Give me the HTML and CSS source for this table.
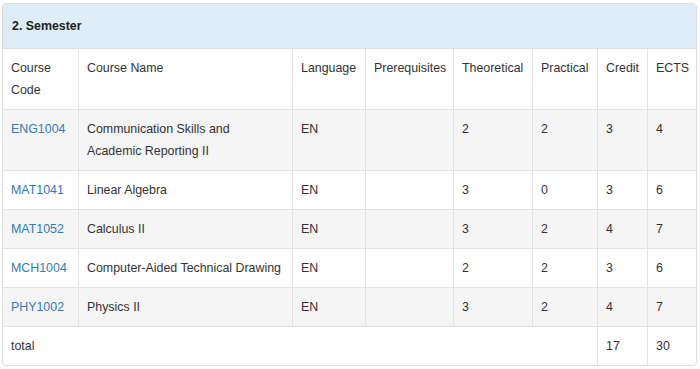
FILE: index.html
```html
<!DOCTYPE html>
<html lang="en">
<head>
<meta charset="utf-8">
<title>2. Semester</title>
<link rel="stylesheet" href="styles.css">
</head>
<body>
<div class="panel">
  <div class="panel-heading">2. Semester</div>
  <table class="courses">
    <colgroup>
      <col class="c-code"><col class="c-name"><col class="c-lang"><col class="c-pre">
      <col class="c-theo"><col class="c-prac"><col class="c-cred"><col class="c-ects">
    </colgroup>
    <thead>
      <tr>
        <th>Course Code</th>
        <th>Course Name</th>
        <th>Language</th>
        <th>Prerequisites</th>
        <th>Theoretical</th>
        <th>Practical</th>
        <th>Credit</th>
        <th>ECTS</th>
      </tr>
    </thead>
    <tbody>
      <tr class="odd">
        <td><a href="#">ENG1004</a></td>
        <td>Communication Skills and Academic Reporting II</td>
        <td>EN</td><td></td><td>2</td><td>2</td><td>3</td><td>4</td>
      </tr>
      <tr>
        <td><a href="#">MAT1041</a></td>
        <td>Linear Algebra</td>
        <td>EN</td><td></td><td>3</td><td>0</td><td>3</td><td>6</td>
      </tr>
      <tr class="odd">
        <td><a href="#">MAT1052</a></td>
        <td>Calculus II</td>
        <td>EN</td><td></td><td>3</td><td>2</td><td>4</td><td>7</td>
      </tr>
      <tr>
        <td><a href="#">MCH1004</a></td>
        <td>Computer-Aided Technical Drawing</td>
        <td>EN</td><td></td><td>2</td><td>2</td><td>3</td><td>6</td>
      </tr>
      <tr class="odd">
        <td><a href="#">PHY1002</a></td>
        <td>Physics II</td>
        <td>EN</td><td></td><td>3</td><td>2</td><td>4</td><td>7</td>
      </tr>
      <tr class="total">
        <td colspan="6">total</td>
        <td>17</td>
        <td>30</td>
      </tr>
    </tbody>
  </table>
</div>
</body>
</html>
```

FILE: styles.css
```css
html, body {
  background: #ffffff;
}
body {
  margin: 3px 3px 0 2px;
  font-family: "Liberation Sans", Arial, Helvetica, sans-serif;
  font-size: 12.4px;
  line-height: 22px;
  color: #333333;
}
.panel {
  border: 1px solid #dddddd;
  border-radius: 4px;
  overflow: hidden;
  background: #ffffff;
}
.panel-heading {
  background: #deedf8;
  border-bottom: 1px solid #dddddd;
  padding: 11px 9px;
  font-weight: bold;
  color: #222222;
}
.courses {
  width: 100%;
  table-layout: fixed;
  border-collapse: separate;
  border-spacing: 0;
}
.c-code { width: 76px; }
.c-name { width: 214px; }
.c-lang { width: 73px; }
.c-pre  { width: 88px; }
.c-theo { width: 79px; }
.c-prac { width: 65px; }
.c-cred { width: 50px; }
.c-ects { width: 49px; }
.courses th,
.courses td {
  padding: 8px 6px 8px 8px;
  text-align: left;
  vertical-align: top;
  font-weight: normal;
  border-right: 1px solid #e3e3e3;
  border-bottom: 1px solid #e3e3e3;
}
.courses th:last-child,
.courses td:last-child {
  border-right: none;
}
.courses tr.total td {
  border-bottom: none;
}
.courses tr.odd td {
  background: #f5f5f5;
}
.courses a {
  color: #337ab7;
  text-decoration: none;
}
```
